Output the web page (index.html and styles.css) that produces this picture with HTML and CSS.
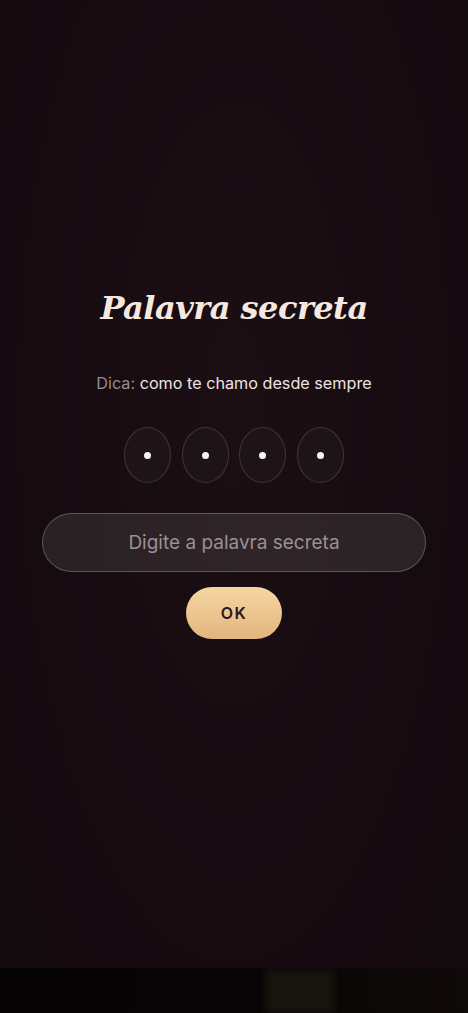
FILE: index.html
```html
<!DOCTYPE html>
<html lang="pt">
<head>
    <meta charset="UTF-8">
    <meta name="viewport" content="width=device-width, initial-scale=1.0">
    <title>Palavra secreta</title>
    <link rel="stylesheet" href="styles.css">
</head>
<body>
    <div class="screen">
        <main class="lock">
            <h1 class="title">Palavra secreta</h1>
            <p class="hint"><span class="hint-label">Dica:</span> como te chamo desde sempre</p>

            <div class="pins">
                <div class="pin"><span class="dot"></span></div>
                <div class="pin"><span class="dot"></span></div>
                <div class="pin"><span class="dot"></span></div>
                <div class="pin"><span class="dot"></span></div>
            </div>

            <input class="secret" type="password" placeholder="Digite a palavra secreta">
            <button class="ok">OK</button>
        </main>

        <!-- blurred strip under the card -->
        <div class="bottom-strip">
            <div class="blob"></div>
        </div>
    </div>
</body>
</html>
```

FILE: styles.css
```css
html, body {
    margin: 0;
    padding: 0;
    height: 100%;
}
body {
    background: #150b10;
    font-family: Inter, "Open Sans", sans-serif;
    color: #eee4e2;
}
.screen {
    height: 100vh;
    display: flex;
    flex-direction: column;
    background:
        radial-gradient(ellipse at 50% 40%, #1b0f14 0%, #160b10 55%, #130a0e 100%);
}
.lock {
    flex: 1;
    display: flex;
    flex-direction: column;
    align-items: center;
    padding-top: 284px;
}
.title {
    margin: 0;
    font-family: "DejaVu Serif", "Liberation Serif", serif;
    font-style: italic;
    font-weight: bold;
    font-size: 32px;
    line-height: 48px;
    letter-spacing: -0.5px;
    color: #f6e8df;
}
.hint {
    margin: 41px 0 0;
    font-size: 16.2px;
    line-height: 20px;
    color: #ece3e2;
}
.hint-label {
    color: #958a8d;
}
.pins {
    display: flex;
    gap: 10.5px;
    margin-top: 34px;
}
.pin {
    box-sizing: border-box;
    width: 47px;
    height: 56px;
    border-radius: 50%;
    border: 1px solid rgba(255, 255, 255, 0.14);
    background: #1e1418;
    display: flex;
    align-items: center;
    justify-content: center;
}
.dot {
    width: 7px;
    height: 7px;
    border-radius: 50%;
    background: #fbf3f0;
}
.secret {
    box-sizing: border-box;
    margin-top: 30px;
    width: 384px;
    height: 59px;
    border-radius: 30px;
    border: 1px solid rgba(255, 255, 255, 0.24);
    background: linear-gradient(90deg, #2a2125, #2f2529 60%, #2b2226);
    text-align: center;
    font-family: Inter, "Open Sans", sans-serif;
    font-size: 19px;
    color: #eee4e2;
    outline: none;
}
.secret::placeholder {
    color: #9c8f93;
}
.ok {
    margin-top: 15px;
    width: 96px;
    height: 52px;
    border: none;
    border-radius: 26px;
    background: linear-gradient(180deg, #f5d7a2 0%, #e2b57d 100%);
    font-family: Inter, "Open Sans", sans-serif;
    font-size: 16px;
    font-weight: 600;
    letter-spacing: 1.5px;
    color: #2b1718;
}
.bottom-strip {
    height: 45px;
    background: linear-gradient(90deg, #060304 0%, #080506 50%, #0f0a08 100%);
    position: relative;
}
.blob {
    position: absolute;
    left: 266px;
    top: 2px;
    width: 68px;
    height: 43px;
    background: #16150e;
    filter: blur(3px);
}
```
